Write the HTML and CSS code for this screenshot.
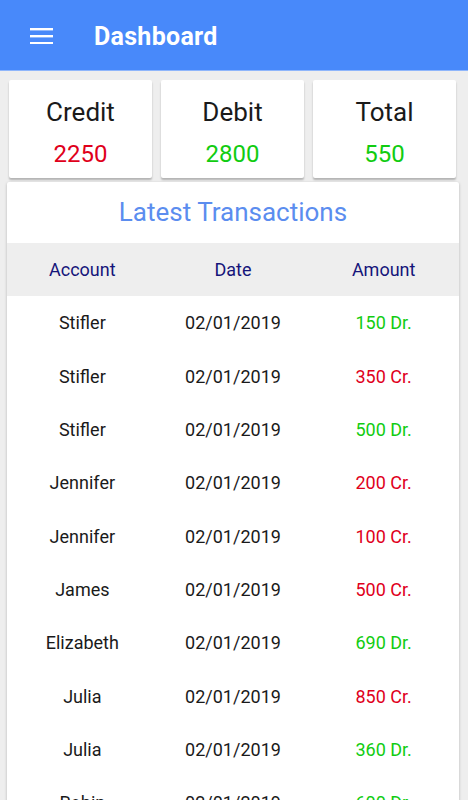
FILE: index.html
```html
<!DOCTYPE html>
<html lang="en">
<head>
    <meta charset="UTF-8">
    <meta name="viewport" content="width=device-width, initial-scale=1.0">
    <title>Dashboard</title>
    <link rel="stylesheet" href="styles.css">
</head>
<body>

    <header class="appbar">
        <svg class="menu-icon" width="24" height="18" viewBox="0 0 24 18">
            <rect x="0" y="2" width="23" height="2.4" fill="#fff"/>
            <rect x="0" y="9" width="23" height="2.4" fill="#fff"/>
            <rect x="0" y="16" width="23" height="2.4" fill="#fff"/>
        </svg>
        <h1 class="appbar-title">Dashboard</h1>
    </header>

    <div class="summary">
        <div class="summary-card">
            <div class="summary-label">Credit</div>
            <div class="summary-value cr">2250</div>
        </div>
        <div class="summary-card">
            <div class="summary-label">Debit</div>
            <div class="summary-value dr">2800</div>
        </div>
        <div class="summary-card">
            <div class="summary-label">Total</div>
            <div class="summary-value dr">550</div>
        </div>
    </div>

    <div class="transactions">
        <h2 class="transactions-title">Latest Transactions</h2>
        <table>
            <thead>
                <tr>
                    <th>Account</th>
                    <th>Date</th>
                    <th>Amount</th>
                </tr>
            </thead>
            <tbody>
                <tr><td>Stifler</td><td>02/01/2019</td><td class="dr">150 Dr.</td></tr>
                <tr><td>Stifler</td><td>02/01/2019</td><td class="cr">350 Cr.</td></tr>
                <tr><td>Stifler</td><td>02/01/2019</td><td class="dr">500 Dr.</td></tr>
                <tr><td>Jennifer</td><td>02/01/2019</td><td class="cr">200 Cr.</td></tr>
                <tr><td>Jennifer</td><td>02/01/2019</td><td class="cr">100 Cr.</td></tr>
                <tr><td>James</td><td>02/01/2019</td><td class="cr">500 Cr.</td></tr>
                <tr><td>Elizabeth</td><td>02/01/2019</td><td class="dr">690 Dr.</td></tr>
                <tr><td>Julia</td><td>02/01/2019</td><td class="cr">850 Cr.</td></tr>
                <tr><td>Julia</td><td>02/01/2019</td><td class="dr">360 Dr.</td></tr>
                <tr><td>Robin</td><td>02/01/2019</td><td class="dr">600 Dr.</td></tr>
            </tbody>
        </table>
    </div>

</body>
</html>
```

FILE: styles.css
```css
body {
    font-family: 'Roboto', 'Liberation Sans', sans-serif;
    background-color: #eeeeee;
    margin: 0;
    padding: 0;
    overflow: hidden;
}

.appbar {
    background-color: #4889fa;
    height: 71px;
    display: flex;
    align-items: center;
    padding-left: 30px;
    box-sizing: border-box;
    border-bottom: 1px solid #8fb6fb;
}

.menu-icon {
    margin-top: -1px;
}

.appbar-title {
    color: #fff;
    font-size: 25px;
    font-weight: 700;
    margin: 2px 0 0 40px;
    letter-spacing: 0.3px;
}

.summary {
    display: grid;
    grid-template-columns: repeat(3, 143px);
    gap: 9px;
    padding: 9px 0 0 9px;
}

.summary-card {
    background-color: #fff;
    height: 98px;
    border-radius: 2px;
    box-shadow: 0 2px 2px rgba(0, 0, 0, 0.25);
    text-align: center;
}

.summary-label {
    font-size: 26px;
    color: #1a1a1a;
    padding-top: 16px;
    line-height: 32px;
}

.summary-value {
    font-size: 24px;
    line-height: 28px;
    margin-top: 12px;
}

.cr {
    color: #e0001b;
}

.dr {
    color: #11cc11;
}

.transactions {
    background-color: #fff;
    margin: 4px 9px 0 7px;
    border-radius: 2px;
    box-shadow: 0 1px 3px rgba(0, 0, 0, 0.25);
}

.transactions-title {
    margin: 0;
    height: 61px;
    line-height: 61px;
    text-align: center;
    font-size: 26px;
    font-weight: 400;
    color: #5b8def;
}

table {
    width: 100%;
    border-collapse: collapse;
    table-layout: fixed;
}

th, td {
    text-align: center;
    font-size: 18px;
    height: 53.3px;
    padding: 0;
}

th {
    background-color: #eeeeee;
    color: #15157a;
    font-weight: 400;
}

td {
    color: #1a1a1a;
}
```
